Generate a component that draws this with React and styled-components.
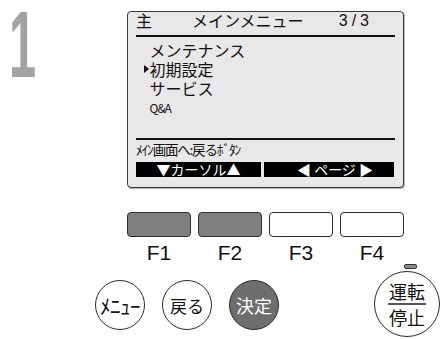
import React from 'react';
import styled, { createGlobalStyle } from 'styled-components';

const Global = createGlobalStyle`
  html, body { margin: 0; padding: 0; background: #fff; }
  body { font-family: "Noto Sans CJK JP", "Noto Sans", sans-serif; color: #111; }
`;

const Page = styled.div`
  width: 446px;
  height: 339px;
  overflow: hidden;
  display: flex;
  background: #fff;
`;

const StepCol = styled.div`
  width: 95px;
  flex: none;
  padding: 10px 0 0 9px;
  box-sizing: border-box;
`;

const StepNum = styled.div`
  display: inline-block;
  font-family: "Liberation Sans", Arial, sans-serif;
  font-weight: 700;
  font-size: 94px;
  line-height: 70px;
  height: 70px;
  color: #a3a3a3;
  transform: scaleX(0.52);
  transform-origin: left top;
`;

const Device = styled.div`
  display: flex;
  flex-direction: column;
  flex: 1;
`;

const Screen = styled.div`
  margin: 11px 0 0 32px;
  width: 277px;
  height: 177px;
  box-sizing: border-box;
  border: 1.5px solid #3a3a3a;
  border-radius: 4px;
  background: #e8e8e8;
  box-shadow: 1px 1px 0 #b5b5b5;
  padding: 0 8px;
  display: flex;
  flex-direction: column;
`;

const Header = styled.div`
  display: flex;
  align-items: flex-start;
  height: 22.5px;
  border-bottom: 2.5px solid #111;
  font-size: 16px;
  line-height: 17px;
  flex: none;
`;

const Title = styled.span`
  margin-left: 40px;
`;

const PageNo = styled.span`
  margin-left: auto;
  margin-right: 22px;
  font-family: "Liberation Sans", Arial, sans-serif;
  font-size: 16px;
  letter-spacing: 4px;
`;

const Menu = styled.div`
  flex: 1;
  padding-top: 4px;
`;

const MenuItem = styled.div`
  display: flex;
  align-items: center;
  height: 19px;
  font-size: ${p => (p.$small ? '12px' : '16px')};
  letter-spacing: ${p => (p.$small ? '-1px' : '0')};
  line-height: 19px;
`;

const Marker = styled.span`
  width: 13.5px;
  flex: none;
  display: flex;
  justify-content: flex-end;
  padding-right: 1px;
  box-sizing: border-box;
`;

const Arrow = styled.span`
  width: 0;
  height: 0;
  border-left: 5px solid #111;
  border-top: 4.5px solid transparent;
  border-bottom: 4.5px solid transparent;
`;

const Footer = styled.div`
  flex: none;
  border-top: 2px solid #111;
  padding-bottom: 10.5px;
`;

const Hint = styled.div`
  font-size: 13.5px;
  letter-spacing: -1.2px;
  line-height: 18px;
  height: 18px;
  white-space: nowrap;
`;

const Bar = styled.div`
  display: flex;
  gap: 3px;
  margin-top: 4px;
  height: 15px;
`;

const BarSeg = styled.div`
  background: #000;
  color: #fff;
  width: ${p => p.$w}px;
  flex: none;
  display: flex;
  align-items: center;
  justify-content: center;
  padding-left: ${p => p.$pl || 0}px;
  box-sizing: border-box;
  font-size: 14px;
  line-height: 15px;
  white-space: pre;
`;

const FnRow = styled.div`
  display: flex;
  gap: 7px;
  margin: 24px 0 0 32px;
`;

const FnKey = styled.div`
  width: 64px;
  display: flex;
  flex-direction: column;
  align-items: center;
`;

const FnButton = styled.div`
  width: 64px;
  height: 25px;
  box-sizing: border-box;
  border: 1.5px solid #2e2e2e;
  border-radius: 4px;
  background: ${p => (p.$on ? '#808080' : '#fff')};
`;

const FnLabel = styled.div`
  font-family: "Liberation Sans", Arial, sans-serif;
  font-size: 21px;
  line-height: 21px;
  margin-top: 5px;
  color: #111;
`;

const BottomRow = styled.div`
  display: flex;
  align-items: flex-start;
`;

const LeftGroup = styled.div`
  display: flex;
  gap: 17px;
  margin-top: 17px;
  width: 279px;
  flex: none;
`;

const RightGroup = styled.div`
  display: flex;
  flex-direction: column;
  align-items: flex-start;
  margin-top: 1px;
`;

const Led = styled.div`
  width: 13px;
  height: 5px;
  box-sizing: border-box;
  margin-left: 30px;
  border: 1px solid #333;
  border-radius: 2px;
  background: #8a8a8a;
`;

const Round = styled.div`
  width: ${p => p.$size}px;
  height: ${p => p.$size}px;
  flex: none;
  box-sizing: border-box;
  border: 1.5px solid #2a2a2a;
  border-radius: 50%;
  background: ${p => (p.$filled ? '#6e6e6e' : '#fff')};
  color: ${p => (p.$filled ? '#fff' : '#111')};
  margin-top: ${p => p.$mt || 0}px;
  display: flex;
  flex-direction: column;
  align-items: center;
  justify-content: center;
  font-size: ${p => p.$fs || 18}px;
  letter-spacing: ${p => p.$ls || 0}px;
  line-height: 1;
  white-space: nowrap;
`;

const PowerLine = styled.div`
  width: 38px;
  height: 1.5px;
  background: #555;
  margin: 3px 0 3px;
`;

export default function App() {
  return (
    <>
      <Global />
      <Page>
        <StepCol>
          <StepNum>1</StepNum>
        </StepCol>
        <Device>
          <Screen>
            <Header>
              <span>主</span>
              <Title>メインメニュー</Title>
              <PageNo>3/3</PageNo>
            </Header>
            <Menu>
              <MenuItem><Marker /><span>メンテナンス</span></MenuItem>
              <MenuItem><Marker><Arrow /></Marker><span>初期設定</span></MenuItem>
              <MenuItem><Marker /><span>サービス</span></MenuItem>
              <MenuItem $small><Marker /><span>Q&amp;A</span></MenuItem>
            </Menu>
            <Footer>
              <Hint>ﾒｲﾝ画面へ:戻るﾎﾞﾀﾝ</Hint>
              <Bar>
                <BarSeg $w={125}>▼カーソル▲</BarSeg>
                <BarSeg $w={130} $pl={12}>◀ ページ ▶</BarSeg>
              </Bar>
            </Footer>
          </Screen>
          <FnRow>
            {['F1', 'F2', 'F3', 'F4'].map((f, i) => (
              <FnKey key={f}>
                <FnButton $on={i < 2} />
                <FnLabel>{f}</FnLabel>
              </FnKey>
            ))}
          </FnRow>
          <BottomRow>
            <LeftGroup>
              <Round $size={50} $fs={21} $ls={-0.5}>ﾒﾆｭｰ</Round>
              <Round $size={50} $fs={17}>戻る</Round>
              <Round $size={50} $fs={18} $filled>決定</Round>
            </LeftGroup>
            <RightGroup>
              <Led />
              <Round $size={66} $fs={18} $mt={2}>
                <span>運転</span>
                <PowerLine />
                <span>停止</span>
              </Round>
            </RightGroup>
          </BottomRow>
        </Device>
      </Page>
    </>
  );
}
